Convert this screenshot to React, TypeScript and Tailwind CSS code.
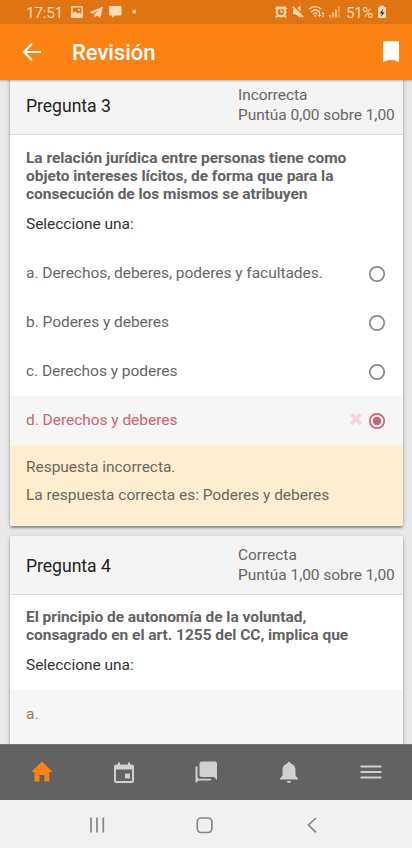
import React from "react";

function StatusBar() {
  return (
    <div className="flex h-6 shrink-0 items-center justify-between bg-[#e07412] text-[#fbdcba]">
      <div className="flex items-center pl-[26px]">
        <span className="w-[45px] pt-px text-[15.5px] leading-6 tracking-[-0.35px]">17:51</span>
        <svg className="h-6 w-[68px]" viewBox="71 0 68 24" fill="currentColor">
          <path fillRule="evenodd" d="M72.5 6h9q1.500 0 1.500 1.500v9q0 1.500-1.500 1.500h-9q-1.500 0-1.500-1.500v-9Q71 6 72.500 6zM72.700 7.500v6.200l2.600-2.400 2.500 2.400 1.600-1.200 2.100 2V7.500z" />
          <circle cx="79" cy="9.700" r="1" />
          <path d="M89.300 12.200L102.800 6.800 100.500 18 96.600 15.600 94.700 17.500 94.300 14.600 100 9.200 92.800 13.700z" />
          <path d="M110 6h10.500q1 0 1 1v7.500q0 1-1 1H115L112 18v-2.500h-2q-1 0-1-1V7q0-1 1-1z" />
          <circle cx="134.200" cy="11.700" r="1.900" />
        </svg>
      </div>
      <div className="flex items-center pr-[25px]">
        <svg className="h-6 w-[66px]" viewBox="274 0 66 24" fill="none" stroke="currentColor">
          <circle cx="281" cy="12" r="4.300" strokeWidth="2.200" />
          <path d="M281 9.500V12.200h2.300" strokeWidth="1.300" />
          <path d="M275.500 9l3-2.700M286.500 9l-3-2.700M277.600 15.600l-1.700 1.800M284.400 15.600l1.700 1.800" strokeWidth="1.800" />
          <path d="M293 9.500h2.700l4.800-4v12.500L295.700 14.200H293z" fill="currentColor" stroke="none" />
          <path d="M293 5.700L304 17" stroke="#e07412" strokeWidth="2.500" />
          <path d="M292.700 6.800L303.300 17.300" strokeWidth="1.500" />
          <path d="M309 9.200q6.300-5.200 12.600 0M311 12q4.300-3.800 8.600-.2M313 14.200q2.300-2 4.600-.2" strokeWidth="1.400" />
          <circle cx="315.300" cy="15.700" r="1" fill="currentColor" stroke="none" />
          <path d="M319.500 12v4.500M318 15l1.500 1.500L321 15M323 17v-4.500M321.500 14l1.500-1.500 1.500 1.500" strokeWidth="1" />
          <path d="M330 15v2.500M333 12.500v5M336 9.500v8" strokeWidth="1.400" />
          <path d="M339 6v11.500" strokeWidth="1.200" opacity=".6" />
        </svg>
        <span className="ml-[6px] w-[31px] whitespace-nowrap pt-px text-[15px] leading-6 tracking-[-0.3px]">51%</span>
        <svg className="h-6 w-[10px]" viewBox="377 0 10 24">
          <path d="M380 5.700h4v1.600h2V18h-8V7.300h2z" fill="currentColor" />
          <path d="M383.200 8.500L379.600 13.500h2.200L380.900 17l3.800-4.700h-2.300z" fill="#4f3a24" />
        </svg>
      </div>
    </div>
  );
}

function AppHeader() {
  return (
    <header className="relative z-10 flex h-14 shrink-0 items-center bg-[#fb8213] text-white shadow-[0_1px_2px_rgba(0,0,0,0.25)]">
      <svg className="ml-[22px] h-6 w-5" viewBox="0 0 20 24" fill="none" stroke="currentColor" strokeWidth="2">
        <path d="M19 12H2.700M10 3.700L2 12l8 8.300" />
      </svg>
      <h1 className="ml-[30px] pt-px text-[22px] font-medium leading-6">Revisión</h1>
      <svg className="ml-auto mr-[13px] h-6 w-4" viewBox="0 0 16 24" fill="currentColor">
        <path d="M1.300 1.300h13.400q1.300 0 1.300 1.300v19.600Q8 17.200 0 22.200V2.600Q0 1.300 1.300 1.300z" />
      </svg>
    </header>
  );
}

function QuestionHeader({ title, state, mark }: { title: string; state: string; mark: string }) {
  return (
    <div className="flex h-[59px] items-center border-b border-[#dcdcdc] bg-[#f4f4f4] pl-4">
      <h2 className="w-[212px] pt-px text-[17.600px] leading-5 text-[#222]">{title}</h2>
      <div className="whitespace-nowrap text-[15.5px] leading-5 tracking-[-0.045px] text-[#666]">
        <p>{state}</p>
        <p>{mark}</p>
      </div>
    </div>
  );
}

function Option({ label, wrong = false }: { label: string; wrong?: boolean }) {
  return (
    <div className={wrong ? "flex h-[49px] items-center bg-[#f6f6f6] px-4 text-[#cb6370]" : "flex h-[49px] items-center px-4 text-[#666]"}>
      <span className="flex-1 pb-px">{label}</span>
      {wrong && (
        <svg className="mr-[7px] mt-[-3px] size-3" viewBox="0 0 12 12" stroke="#f3d4d9" strokeWidth="3.700">
          <path d="M1.300 1.300l9.400 9.400M10.700 1.300l-9.400 9.400" />
        </svg>
      )}
      <svg className="mr-[2px] size-4 overflow-visible" viewBox="0 0 16 16" fill="none">
        <circle cx="8" cy="8" r="7.200" stroke={wrong ? "#cb6370" : "#888"} strokeWidth="1.700" />
        {wrong && <circle cx="8" cy="8" r="4.200" fill="#cb6370" />}
      </svg>
    </div>
  );
}

const card = "mx-[9px] ml-[10px] shrink-0 overflow-hidden rounded-[2px] bg-white shadow-[0_2px_2px_rgba(0,0,0,0.3),0_1px_5px_rgba(0,0,0,0.2)]";

function TabBar() {
  return (
    <nav className="grid h-14 shrink-0 grid-cols-5 place-items-center border-t border-[#747474] bg-[#626262] pb-px pl-px text-[#d0d0d0]">
      <svg className="-ml-px size-6" viewBox="0 0 24 24" fill="#fb8213">
        <path d="M12 1.500L1.800 11.500V12H4.500v9.500H9.500V15h4.800v6.500h5V12h2.900v-.5z" />
      </svg>
      <svg className="size-6" viewBox="0 0 24 24" fill="currentColor">
        <path fillRule="evenodd" d="M6 2.500h2v2h8v-2h2v2h2q2 0 2 2V21q0 2-2 2H4q-2 0-2-2V6.500q0-2 2-2h2zM4 9.500V21h16V9.500zM13 13.500h5v5h-5z" />
      </svg>
      <svg className="size-6" viewBox="0 0 24 24" fill="currentColor">
        <path d="M7.500 1.500H21q2 0 2 2V20l-3-3H7.500q-2 0-2-2V3.500q0-2 2-2z" />
        <path d="M1.500 6.500h2V17q0 1.800 2 1.800H17v1.700H5L1.500 23z" />
      </svg>
      <svg className="size-6" viewBox="0 0 24 24" fill="currentColor">
        <path d="M12 1.700q1.500 0 1.700 1.800 4.800 1.400 4.800 6.500v5.500L21 18.500v1H3v-1L5.500 15.500V10q0-5.100 4.800-6.500.2-1.800 1.700-1.800zM9.700 21h4.600q-.5 2-2.300 2t-2.300-2z" />
      </svg>
      <svg className="ml-px size-6" viewBox="0 0 24 24" fill="none" stroke="currentColor" strokeWidth="2">
        <path d="M1.500 6.500h21M1.500 12h21M1.500 17.500h21" />
      </svg>
    </nav>
  );
}

export default function App() {
  return (
    <div className="flex h-[848px] w-[412px] flex-col overflow-hidden bg-[#e8e8e8] font-['Roboto',sans-serif] text-[15.5px] leading-5 tracking-[-0.035px]">
      <StatusBar />
      <AppHeader />
      <main className="flex min-h-0 flex-1 flex-col gap-[10px] overflow-hidden">
        <section className={card + " -mt-1 h-[450px]"}>
          <QuestionHeader title="Pregunta 3" state="Incorrecta" mark="Puntúa 0,00 sobre 1,00" />
          <div className="h-[114px] whitespace-nowrap px-4 pt-[14px]">
            <p className="font-bold leading-[18px] text-[#626262]">
              La relación jurídica entre personas tiene como<br />
              objeto intereses lícitos, de forma que para la<br />
              consecución de los mismos se atribuyen
            </p>
            <p className="mt-[11px] text-[#333]">Seleccione una:</p>
          </div>
          <Option label="a. Derechos, deberes, poderes y facultades." />
          <Option label="b. Poderes y deberes" />
          <Option label="c. Derechos y poderes" />
          <Option label="d. Derechos y deberes" wrong />
          <div className="h-[81px] bg-[#feeed0] px-4 pt-3 leading-7 text-[#6b675f]">
            <p className="-mt-1">Respuesta incorrecta.</p>
            <p>La respuesta correcta es: Poderes y deberes</p>
          </div>
        </section>
        <section className={card + " h-[240px]"}>
          <QuestionHeader title="Pregunta 4" state="Correcta" mark="Puntúa 1,00 sobre 1,00" />
          <div className="h-[95px] whitespace-nowrap px-4 pt-[13px]">
            <p className="font-bold leading-[18px] text-[#626262]">
              El principio de autonomía de la voluntad,<br />
              consagrado en el art. 1255 del CC, implica que
            </p>
            <p className="mt-[11px] text-[#333]">Seleccione una:</p>
          </div>
          <div className="flex h-[86px] bg-[#f6f6f6] px-4 pt-[14px] text-[#9c7a4b]">a.</div>
        </section>
      </main>
      <TabBar />
      <div className="h-12 shrink-0 bg-[#f1f1f1]">
        <svg className="h-12 w-full" viewBox="0 0 412 48" fill="none" stroke="#858585" strokeWidth="1.700">
          <path d="M91 17.500v15M97 17.500v15M103.300 17.500v15" />
          <rect x="197.300" y="18" width="14.600" height="14.500" rx="4" />
          <path d="M316 18l-7.500 7L316 32.300" />
        </svg>
      </div>
    </div>
  );
}
